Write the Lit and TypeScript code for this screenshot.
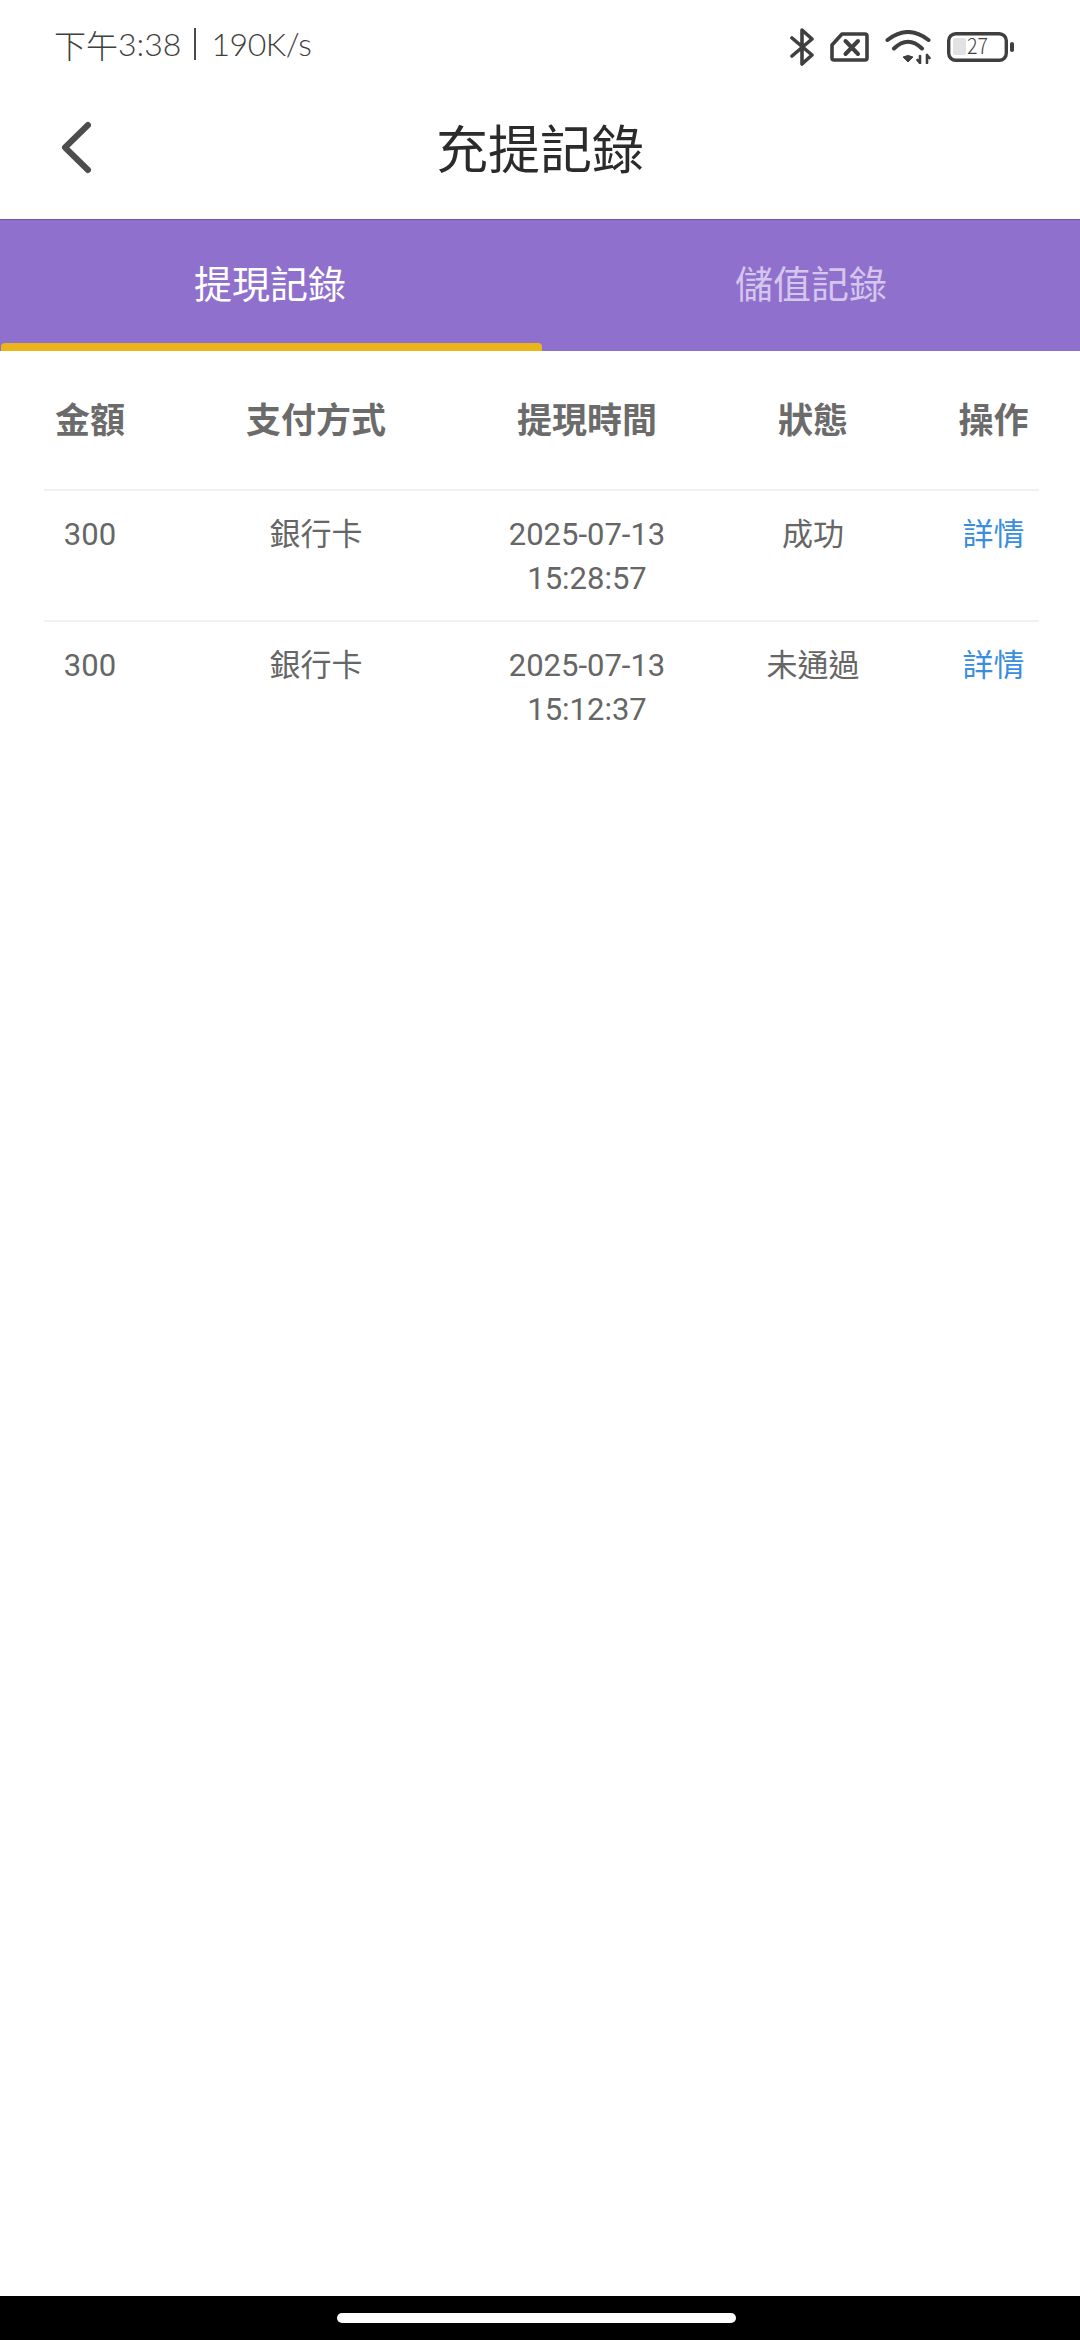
import { LitElement, html, css } from "lit";
import { customElement } from "lit/decorators.js";

const rows = [
  { amount: "300", method: "銀行卡", date: "2025-07-13", time: "15:28:57", status: "成功" },
  { amount: "300", method: "銀行卡", date: "2025-07-13", time: "15:12:37", status: "未通過" },
];

@customElement("app-root")
export class AppRoot extends LitElement {
  static styles = css`
    :host {
      display: flex;
      flex-direction: column;
      width: 1080px;
      height: 2340px;
      background: #fff;
      font-family: Roboto, "Noto Sans CJK TC", sans-serif;
      overflow: hidden;
    }
    .status {
      height: 85px;
      display: flex;
      align-items: center;
      justify-content: space-between;
      padding: 0 66px 0 54px;
      flex: none;
      color: #3f3f3f;
    }
    .status-text {
      font-family: "Noto Sans CJK TC", sans-serif;
      font-weight: 300;
      font-size: 32px;
      line-height: 40px;
      white-space: nowrap;
      position: relative;
      top: 1px;
      display: flex;
      align-items: center;
    }
    .latin { font-family: Lato, sans-serif; font-weight: 300; font-size: 32px; }
    .latin.speed { letter-spacing: -0.4px; }
    .sep { margin: 0 15px 0 13px; width: 2px; height: 32px; background: #4a4a4a; }
    .icons { display: flex; align-items: center; gap: 16px; padding-top: 9px; }
    .icons svg { display: block; }
    .icons .batt { margin-left: -1px; }
    .bar {
      height: 134px;
      flex: none;
      display: flex;
      align-items: center;
      justify-content: center;
      position: relative;
    }
    .back { position: absolute; left: 58px; top: 33px; display: block; }
    .title { font-size: 52px; line-height: 70px; color: #2b2b2b; font-weight: 400; }
    .tabs {
      height: 131px;
      flex: none;
      display: grid;
      grid-template-columns: 1fr 1fr;
      background: #8f70cc;
      border-top: 1px solid #6f5a9c;
      color: #fff;
    }
    .tab {
      display: flex;
      align-items: center;
      justify-content: center;
      font-size: 38px;
      padding-bottom: 8px;
      position: relative;
    }
    .tab.inactive { color: #d5c6ee; padding-left: 2px; }
    .tab.active::after {
      content: "";
      position: absolute;
      left: 1px;
      right: -2px;
      bottom: 0;
      height: 8px;
      border-radius: 4px 4px 0 0;
      background: #ecb41b;
    }
    .table { margin: 0 41px 0 44px; }
    .row {
      display: grid;
      grid-template-columns: 92px 360px 182px 270px 91px;
      text-align: center;
      border-bottom: 2px solid #f1f1f1;
    }
    .row.head {
      height: 140px;
      box-sizing: border-box;
      align-items: center;
      font-size: 35px;
      font-weight: 700;
      color: #6b6b6b;
      padding-bottom: 5px;
    }
    .row.body {
      font-size: 31px;
      line-height: 44px;
      color: #666;
      padding: 22px 0 19px;
    }
    .row.body:last-child { border-bottom: none; }
    .cell { white-space: nowrap; display: flex; flex-direction: column; align-items: center; }
    .link { color: #3b8ede; }
    .spacer { flex: 1; }
    .nav {
      height: 44px;
      flex: none;
      background: #000;
      display: flex;
      justify-content: center;
      padding: 17px 7px 0 0;
      box-sizing: border-box;
    }
    .pill { width: 399px; height: 10px; border-radius: 5px; background: #fff; }
  `;

  render() {
    return html`
      <div class="status">
        <span class="status-text">下午<span class="latin">3:38</span><span class="sep"></span><span class="latin speed">190K/s</span></span>
        <div class="icons">
          <svg width="24" height="38" viewBox="0 0 24 38" fill="none" stroke="#3f3f3f" stroke-width="3.6" stroke-linecap="round" stroke-linejoin="round">
            <path d="M2 10 L22 27 L12 36 L12 2 L22 11 L2 28"/>
          </svg>
          <svg width="39" height="30" viewBox="0 0 39 30" fill="none" stroke="#3f3f3f" stroke-width="3.6" stroke-linecap="round" stroke-linejoin="round">
            <path d="M2 13 L12 2 L35 2 Q37 2 37 4 L37 26 Q37 28 35 28 L4 28 Q2 28 2 26 Z"/>
            <path d="M15.5 9 L28 22 M28 9 L15.5 22" stroke-width="4"/>
          </svg>
          <svg width="46" height="34" viewBox="0 0 46 34">
            <path d="M2.5 10 Q23 -6 43.5 10 M9 18.5 Q23 5 37 18.5" fill="none" stroke="#3f3f3f" stroke-width="4" stroke-linecap="round"/>
            <path d="M18 27 Q23 24 28 27 L23 32 Z" fill="#3f3f3f" stroke="#3f3f3f" stroke-width="1" stroke-linejoin="round"/>
            <path d="M35 26 L35 33 M32.5 30 L35 33 M42 25 L42 33 M42 25 L44.5 28" fill="none" stroke="#3f3f3f" stroke-width="2.6" stroke-linecap="round"/>
          </svg>
          <svg class="batt" width="68" height="40" viewBox="0 -5 68 40">
            <rect x="2.7" y="1.7" width="57.6" height="26.6" rx="7" fill="none" stroke="#3f3f3f" stroke-width="3.4"/>
            <rect x="7" y="6" width="13" height="17" rx="2" fill="#e2e2e2"/>
            <rect x="64" y="10" width="4" height="10" rx="2" fill="#3f3f3f"/>
            <text x="21" y="22" font-family="Noto Sans CJK TC, sans-serif" font-weight="300" font-size="22" textLength="21" lengthAdjust="spacingAndGlyphs" fill="#3f3f3f">27</text>
          </svg>
        </div>
      </div>
      <div class="bar">
        <svg class="back" width="36" height="58" viewBox="0 0 36 58" fill="none" stroke="#4d4d4d" stroke-width="6" stroke-linecap="round" stroke-linejoin="round">
          <path d="M30 7 L7 29.5 L30 52"/>
        </svg>
        <div class="title">充提記錄</div>
      </div>
      <div class="tabs">
        <div class="tab active">提現記錄</div>
        <div class="tab inactive">儲值記錄</div>
      </div>
      <div class="table">
        <div class="row head">
          <div class="cell">金額</div>
          <div class="cell">支付方式</div>
          <div class="cell">提現時間</div>
          <div class="cell">狀態</div>
          <div class="cell">操作</div>
        </div>
        ${rows.map(
          (r) => html`
            <div class="row body">
              <div class="cell">${r.amount}</div>
              <div class="cell">${r.method}</div>
              <div class="cell"><span>${r.date}</span><span>${r.time}</span></div>
              <div class="cell">${r.status}</div>
              <div class="cell link">詳情</div>
            </div>
          `
        )}
      </div>
      <div class="spacer"></div>
      <div class="nav"><div class="pill"></div></div>
    `;
  }
}
